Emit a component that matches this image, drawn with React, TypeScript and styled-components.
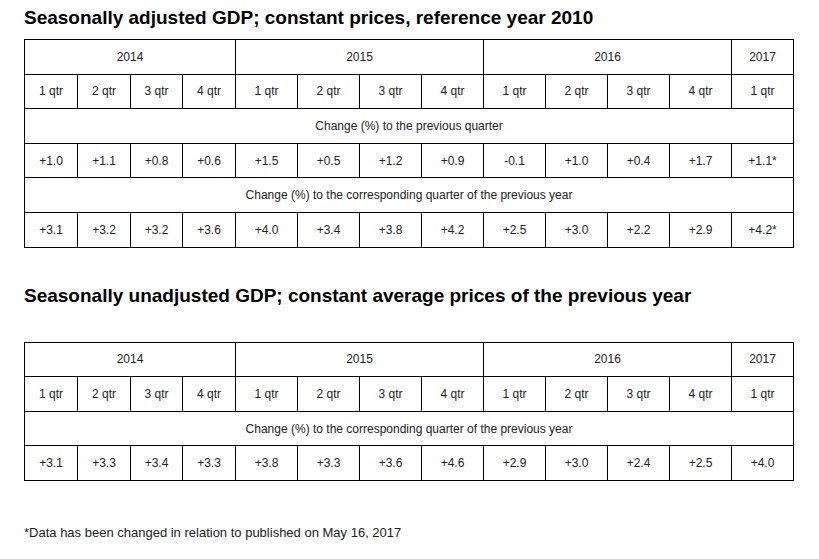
import styled, { createGlobalStyle } from 'styled-components';

const GlobalStyle = createGlobalStyle`
  html, body {
    margin: 0;
    padding: 0;
    background: #ffffff;
  }
`;

const Page = styled.div`
  padding: 7px 24px 0 24px;
  font-family: "Liberation Sans", Arial, sans-serif;
  color: #222222;
`;

const Title = styled.h2<{ $gap: number }>`
  margin: 0 0 ${({ $gap }) => $gap}px 0;
  font-size: 19px;
  line-height: 22px;
  font-weight: bold;
  color: #000000;
  white-space: nowrap;
`;

const Table = styled.table<{ $after: number }>`
  border-collapse: collapse;
  table-layout: fixed;
  width: 769px;
  margin-bottom: ${({ $after }) => $after}px;
`;

const Row = styled.tr`
  height: 34.6px;
`;

const Cell = styled.td`
  border: 1px solid #000000;
  padding: 0;
  text-align: center;
  vertical-align: middle;
  font-size: 12px;
  color: #222222;
`;

const Footnote = styled.p`
  margin: 0;
  font-size: 13px;
  line-height: 15px;
  color: #222222;
`;

const widths = [53, 53, 52, 53, 62, 62, 62, 62, 62, 62, 62, 62, 62];
const years = [
  { label: '2014', span: 4 },
  { label: '2015', span: 4 },
  { label: '2016', span: 4 },
  { label: '2017', span: 1 },
];
const quarters = ['1 qtr', '2 qtr', '3 qtr', '4 qtr', '1 qtr', '2 qtr', '3 qtr', '4 qtr', '1 qtr', '2 qtr', '3 qtr', '4 qtr', '1 qtr'];

interface Section {
  caption: string;
  values: string[];
}

const GdpTable = ({ sections, after }: { sections: Section[]; after: number }) => (
  <Table $after={after}>
    <colgroup>
      {widths.map((w, i) => (
        <col key={i} style={{ width: w }} />
      ))}
    </colgroup>
    <tbody>
      <Row>
        {years.map((y) => (
          <Cell key={y.label} colSpan={y.span}>{y.label}</Cell>
        ))}
      </Row>
      <Row>
        {quarters.map((q, i) => (
          <Cell key={i}>{q}</Cell>
        ))}
      </Row>
      {sections.flatMap((s) => [
        <Row key={s.caption + 'c'}>
          <Cell colSpan={13}>{s.caption}</Cell>
        </Row>,
        <Row key={s.caption + 'v'}>
          {s.values.map((v, i) => (
            <Cell key={i}>{v}</Cell>
          ))}
        </Row>,
      ])}
    </tbody>
  </Table>
);

const adjusted: Section[] = [
  {
    caption: 'Change (%) to the previous quarter',
    values: ['+1.0', '+1.1', '+0.8', '+0.6', '+1.5', '+0.5', '+1.2', '+0.9', '-0.1', '+1.0', '+0.4', '+1.7', '+1.1*'],
  },
  {
    caption: 'Change (%) to the corresponding quarter of the previous year',
    values: ['+3.1', '+3.2', '+3.2', '+3.6', '+4.0', '+3.4', '+3.8', '+4.2', '+2.5', '+3.0', '+2.2', '+2.9', '+4.2*'],
  },
];

const unadjusted: Section[] = [
  {
    caption: 'Change (%) to the corresponding quarter of the previous year',
    values: ['+3.1', '+3.3', '+3.4', '+3.3', '+3.8', '+3.3', '+3.6', '+4.6', '+2.9', '+3.0', '+2.4', '+2.5', '+4.0'],
  },
];

export default function App() {
  return (
    <>
      <GlobalStyle />
      <Page>
        <Title $gap={10}>Seasonally adjusted GDP; constant prices, reference year 2010</Title>
        <GdpTable sections={adjusted} after={37} />
        <Title $gap={35}>Seasonally unadjusted GDP; constant average prices of the previous year</Title>
        <GdpTable sections={unadjusted} after={44} />
        <Footnote>*Data has been changed in relation to published on May 16, 2017</Footnote>
      </Page>
    </>
  );
}
